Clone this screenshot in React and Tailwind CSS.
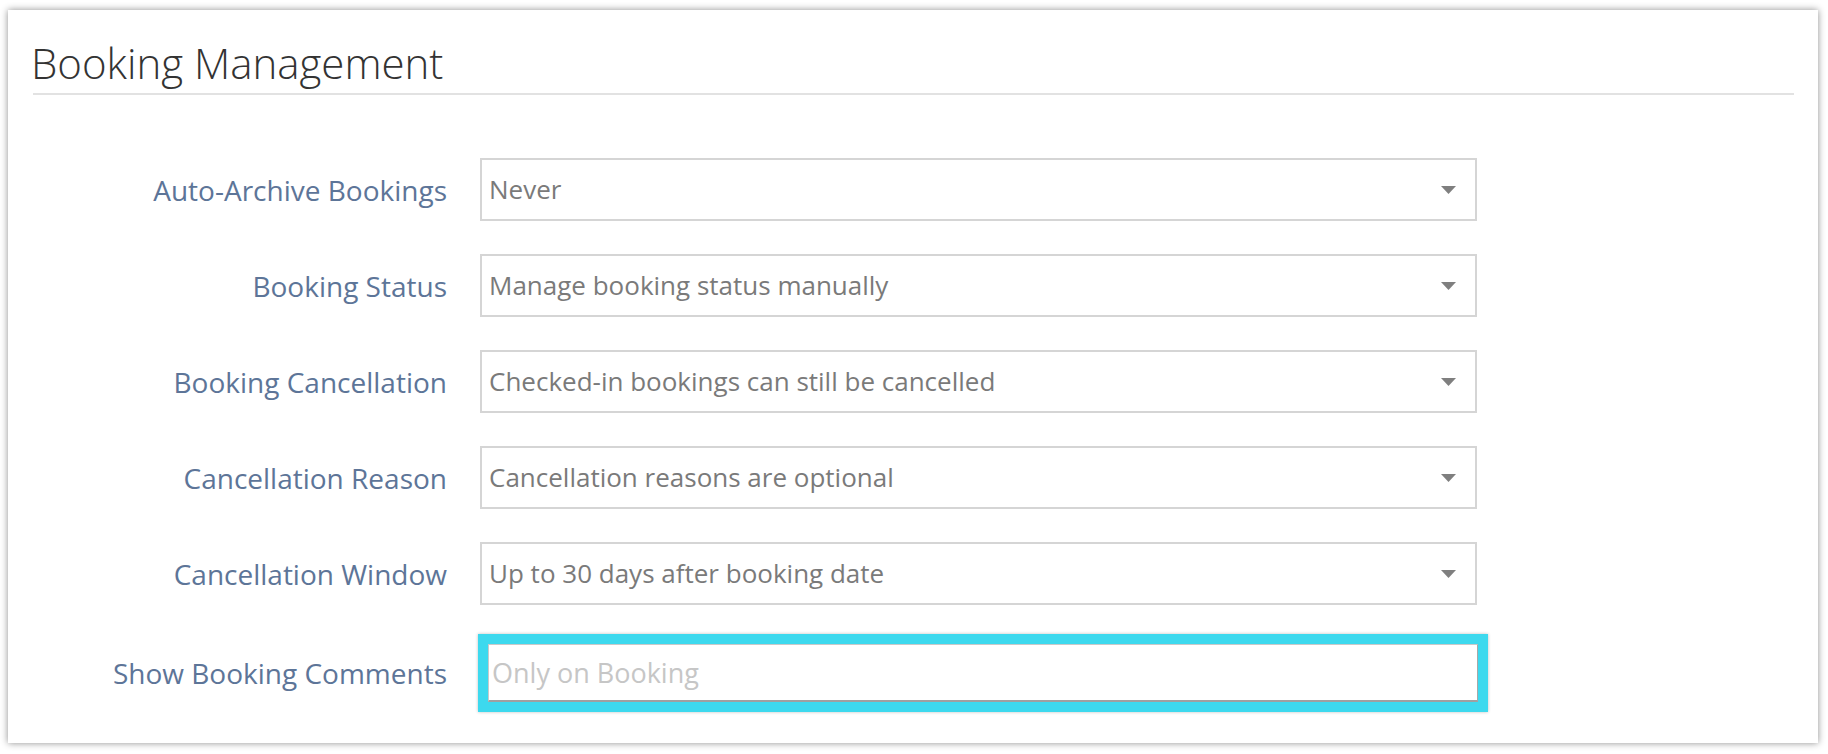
const rows = [
  { label: 'Auto-Archive Bookings', value: 'Never' },
  { label: 'Booking Status', value: 'Manage booking status manually' },
  { label: 'Booking Cancellation', value: 'Checked-in bookings can still be cancelled' },
  { label: 'Cancellation Reason', value: 'Cancellation reasons are optional' },
  { label: 'Cancellation Window', value: 'Up to 30 days after booking date' },
];

function Caret() {
  return (
    <svg width="15" height="8" viewBox="0 0 15 8" className="shrink-0">
      <path d="M0 0 H15 L7.5 8 Z" fill="#7f7f7f" />
    </svg>
  );
}

function SelectRow({ label, value }) {
  return (
    <div className="flex items-center">
      <div className="w-[440px] shrink-0 pr-[1px] text-right text-[28px] text-[#5d7598]">{label}</div>
      <div className="ml-[32px] flex h-[63px] w-[997px] items-center justify-between border-2 border-[#d5d5d5] bg-white pl-[7px] pr-[19px]">
        <span className="text-[26px] text-[#7a7a7a]">{value}</span>
        <Caret />
      </div>
    </div>
  );
}

export default function App() {
  return (
    <div className="h-[754px] w-[1828px] bg-white pl-[8px] pt-[10px]" style={{ fontFamily: '"Open Sans", sans-serif' }}>
      <div className="h-[733px] w-[1810px] bg-white shadow-[0_0_7px_rgba(0,0,0,0.45)]">
        <div className="px-[25px] pt-[24px]">
          <h1 className="-ml-[2px] pb-[1px] text-[42px] font-light leading-[58px] text-[#333333]">Booking Management</h1>
          <div className="h-[2px] w-[1761px] bg-[#e2e2e2]" />
        </div>

        <div className="mt-[63px] flex flex-col gap-[33px]">
          {rows.map((r) => (
            <SelectRow key={r.label} {...r} />
          ))}
          <div className="-mt-[4px] flex items-center">
            <div className="w-[440px] shrink-0 pr-[1px] text-right text-[28px] text-[#5d7598]">Show Booking Comments</div>
            <div className="ml-[30px] border-[10px] border-[#3dd9ee] shadow-[0_0_3px_rgba(0,0,0,0.25)]">
              <input
                readOnly
                placeholder="Only on Booking"
                className="block h-[58px] w-[990px] border border-t-[#c9c9c9] border-l-[#c9c9c9] border-r-[#a8a8a8] border-b-[#a0a0a0] border-b-2 bg-white pl-[3px] text-[27px] text-[#555] outline-none placeholder:text-[#c6c6c6]"
              />
            </div>
          </div>
        </div>
      </div>
    </div>
  );
}
